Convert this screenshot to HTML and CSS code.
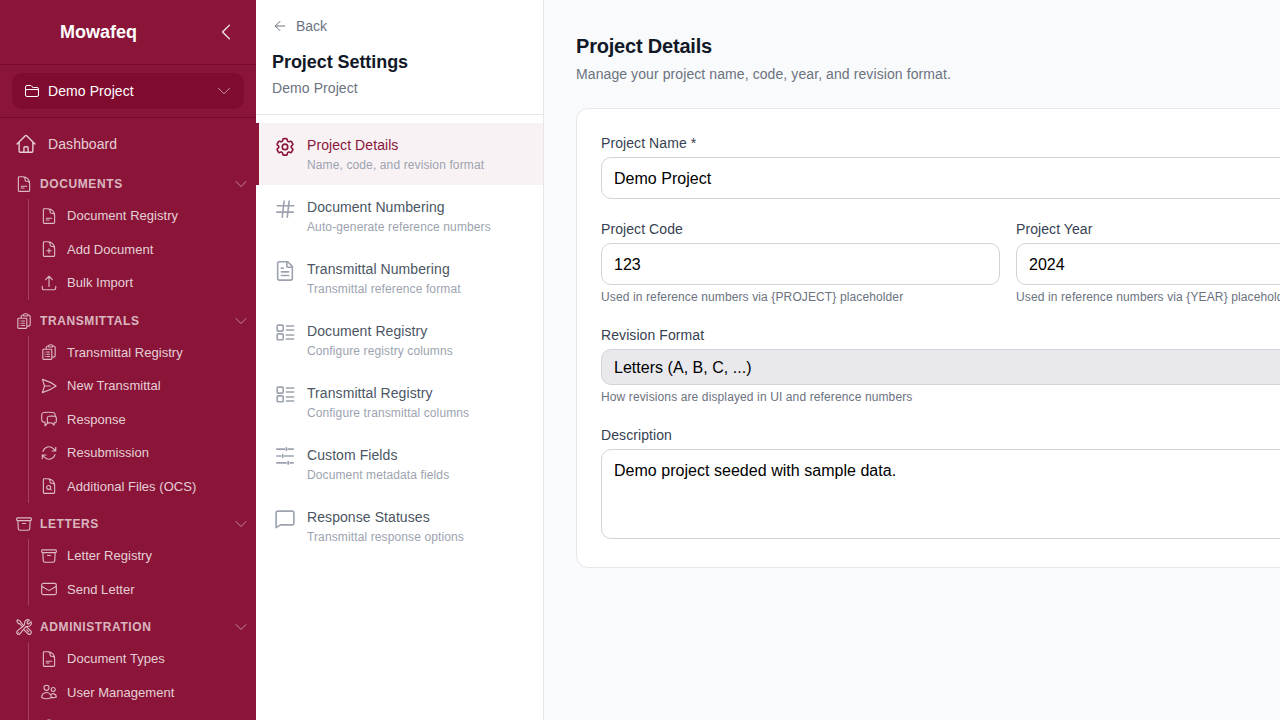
FILE: index.html
```html
<!DOCTYPE html>
<html lang="en">
<head>
<meta charset="utf-8">
<title>Project Settings</title>
<link rel="stylesheet" href="styles.css">
</head>
<body>
<svg class="defs" aria-hidden="true">
<symbol id="i-home" viewBox="0 0 24 24"><path d="m2.25 12 8.954-8.955c.44-.439 1.152-.439 1.591 0L21.75 12M4.5 9.75v10.125c0 .621.504 1.125 1.125 1.125H9.75v-4.875c0-.621.504-1.125 1.125-1.125h2.25c.621 0 1.125.504 1.125 1.125V21h4.125c.621 0 1.125-.504 1.125-1.125V9.75M8.25 21h8.25"/></symbol>
<symbol id="i-folder" viewBox="0 0 24 24"><path d="M2.25 12.75V12A2.25 2.25 0 0 1 4.5 9.75h15A2.25 2.25 0 0 1 21.75 12v.75m-8.69-6.44-2.12-2.12a1.5 1.5 0 0 0-1.061-.44H4.5A2.25 2.25 0 0 0 2.25 6v12a2.25 2.25 0 0 0 2.25 2.25h15A2.25 2.25 0 0 0 21.75 18V9a2.25 2.25 0 0 0-2.25-2.25h-5.379a1.5 1.5 0 0 1-1.06-.44Z"/></symbol>
<symbol id="i-left" viewBox="0 0 24 24"><path d="M15.75 19.5 8.25 12l7.5-7.5"/></symbol>
<symbol id="i-down" viewBox="0 0 24 24"><path d="m19.5 8.25-7.5 7.5-7.5-7.5"/></symbol>
<symbol id="i-back" viewBox="0 0 24 24"><path d="M19 12H5M12 19l-7-7 7-7"/></symbol>
<symbol id="i-doc" viewBox="0 0 24 24"><path d="M19.5 14.25v-2.625a3.375 3.375 0 0 0-3.375-3.375h-1.5A1.125 1.125 0 0 1 13.5 7.125v-1.5a3.375 3.375 0 0 0-3.375-3.375H8.25m0 12.750h7.500m-7.500 2.250h3.750M10.500 2.250H5.625c-.621 0-1.125.504-1.125 1.125v17.250c0 .621.504 1.125 1.125 1.125h12.750c.621 0 1.125-.504 1.125-1.125V11.250a9 9 0 0 0-9-9Z"/></symbol>
<symbol id="i-docplus" viewBox="0 0 24 24"><path d="M19.5 14.25v-2.625a3.375 3.375 0 0 0-3.375-3.375h-1.5A1.125 1.125 0 0 1 13.5 7.125v-1.5a3.375 3.375 0 0 0-3.375-3.375H8.25m3.75 9v6m3-3H9m1.5-12H5.625c-.621 0-1.125.504-1.125 1.125v17.25c0 .621.504 1.125 1.125 1.125h12.75c.621 0 1.125-.504 1.125-1.125V11.25a9 9 0 0 0-9-9Z"/></symbol>
<symbol id="i-upload" viewBox="0 0 24 24"><path d="M3 16.5v2.25A2.25 2.25 0 0 0 5.25 21h13.5A2.25 2.25 0 0 0 21 18.75V16.5m-13.5-9L12 3m0 0 4.5 4.5M12 3v13.5"/></symbol>
<symbol id="i-clip" viewBox="0 0 24 24"><path d="M9 12h3.75M9 15h3.75M9 18h3.75m3 .75H18a2.25 2.25 0 0 0 2.25-2.25V6.108c0-1.135-.845-2.098-1.976-2.192a48.424 48.424 0 0 0-1.123-.08m-5.801 0c-.065.21-.1.433-.1.664 0 .414.336.75.75.75h4.5a.75.75 0 0 0 .75-.75 2.25 2.25 0 0 0-.1-.664m-5.8 0A2.251 2.251 0 0 1 13.5 2.25H15c1.012 0 1.867.668 2.15 1.586m-5.8 0c-.376.023-.75.05-1.124.08C9.095 4.01 8.25 4.973 8.25 6.108V8.25m0 0H4.875c-.621 0-1.125.504-1.125 1.125v11.25c0 .621.504 1.125 1.125 1.125h9.75c.621 0 1.125-.504 1.125-1.125V9.375c0-.621-.504-1.125-1.125-1.125H8.25ZM6.75 12h.008v.008H6.75V12Zm0 3h.008v.008H6.75V15Zm0 3h.008v.008H6.75V18Z"/></symbol>
<symbol id="i-send" viewBox="0 0 24 24"><path d="M6 12 3.269 3.125A59.769 59.769 0 0 1 21.485 12 59.768 59.768 0 0 1 3.27 20.875L5.999 12Zm0 0h7.5"/></symbol>
<symbol id="i-chats" viewBox="0 0 24 24"><path d="M20.25 8.511c.884.284 1.5 1.128 1.5 2.097v4.286c0 1.136-.847 2.1-1.98 2.193-.34.027-.68.052-1.02.072v3.091l-3-3c-1.354 0-2.694-.055-4.02-.163a2.115 2.115 0 0 1-.825-.242m9.345-8.334a2.126 2.126 0 0 0-.476-.095 48.64 48.64 0 0 0-8.048 0c-1.131.094-1.976 1.057-1.976 2.192v4.286c0 .837.46 1.58 1.155 1.951m9.345-8.334V6.637c0-1.621-1.152-3.026-2.76-3.235A48.455 48.455 0 0 0 11.25 3c-2.115 0-4.198.137-6.24.402-1.608.209-2.76 1.614-2.76 3.235v6.226c0 1.621 1.152 3.026 2.76 3.235.577.075 1.157.14 1.74.194V21l4.155-4.155"/></symbol>
<symbol id="i-sync" viewBox="0 0 24 24"><path d="M16.023 9.348h4.992v-.001M2.985 19.644v-4.992m0 0h4.992m-4.993 0 3.181 3.183a8.25 8.25 0 0 0 13.803-3.7M4.031 9.865a8.25 8.25 0 0 1 13.803-3.7l3.181 3.182m0-4.991v4.99"/></symbol>
<symbol id="i-docsearch" viewBox="0 0 24 24"><path d="M19.5 14.25v-2.625a3.375 3.375 0 0 0-3.375-3.375h-1.5A1.125 1.125 0 0 1 13.5 7.125v-1.5a3.375 3.375 0 0 0-3.375-3.375H8.25m5.231 13.481L15 17.25m-4.5-15H5.625c-.621 0-1.125.504-1.125 1.125v17.25c0 .621.504 1.125 1.125 1.125h12.75c.621 0 1.125-.504 1.125-1.125V11.25a9 9 0 0 0-9-9Zm3.75 11.625a2.625 2.625 0 1 1-5.25 0 2.625 2.625 0 0 1 5.25 0Z"/></symbol>
<symbol id="i-archive" viewBox="0 0 24 24"><path d="m20.25 7.5-.625 10.632a2.25 2.25 0 0 1-2.247 2.118H6.622a2.25 2.25 0 0 1-2.247-2.118L3.75 7.5M10 11.25h4M3.375 7.5h17.25c.621 0 1.125-.504 1.125-1.125v-1.5c0-.621-.504-1.125-1.125-1.125H3.375c-.621 0-1.125.504-1.125 1.125v1.5c0 .621.504 1.125 1.125 1.125Z"/></symbol>
<symbol id="i-mail" viewBox="0 0 24 24"><path d="M21.75 6.75v10.5a2.25 2.25 0 0 1-2.25 2.25h-15a2.25 2.25 0 0 1-2.25-2.25V6.75m19.5 0A2.25 2.25 0 0 0 19.5 4.5h-15a2.25 2.25 0 0 0-2.25 2.25m19.5 0v.243a2.25 2.25 0 0 1-1.07 1.916l-7.5 4.615a2.25 2.25 0 0 1-2.36 0L3.32 8.91a2.25 2.25 0 0 1-1.07-1.916V6.75"/></symbol>
<symbol id="i-tools" viewBox="0 0 24 24"><path d="M11.42 15.17 17.25 21A2.652 2.652 0 0 0 21 17.25l-5.877-5.877M11.42 15.17l2.496-3.03c.317-.384.74-.626 1.208-.766M11.42 15.17l-4.655 5.653a2.548 2.548 0 1 1-3.586-3.586l6.837-5.63m5.108-.233c.55-.164 1.163-.188 1.743-.14a4.5 4.5 0 0 0 4.486-6.336l-3.276 3.277a3.004 3.004 0 0 1-2.25-2.25l3.276-3.276a4.5 4.5 0 0 0-6.336 4.486c.091 1.076-.071 2.264-.904 2.95l-.102.085m-1.745 1.437L5.909 7.5H4.5L2.25 3.75l1.5-1.5L7.5 4.5v1.409l4.26 4.26m-1.745 1.437 1.745-1.437m6.615 8.206L15.75 15.75M4.867 19.125h.008v.008h-.008v-.008Z"/></symbol>
<symbol id="i-users" viewBox="0 0 24 24"><path d="M15 19.128a9.38 9.38 0 0 0 2.625.372 9.337 9.337 0 0 0 4.121-.952 4.125 4.125 0 0 0-7.533-2.493M15 19.128v-.003c0-1.113-.285-2.16-.786-3.07M15 19.128v.106A12.318 12.318 0 0 1 8.624 21c-2.331 0-4.512-.645-6.374-1.766l-.001-.109a6.375 6.375 0 0 1 11.964-3.07M12 6.375a3.375 3.375 0 1 1-6.75 0 3.375 3.375 0 0 1 6.75 0Zm8.25 2.25a2.625 2.625 0 1 1-5.25 0 2.625 2.625 0 0 1 5.25 0Z"/></symbol>
<symbol id="i-cog" viewBox="0 -1 24 24"><path d="M9.594 3.94c.09-.542.56-.94 1.11-.94h2.593c.55 0 1.02.398 1.11.94l.213 1.281c.063.374.313.686.645.87.074.04.147.083.22.127.325.196.72.257 1.075.124l1.217-.456a1.125 1.125 0 0 1 1.37.49l1.296 2.247a1.125 1.125 0 0 1-.26 1.431l-1.003.827c-.293.241-.438.613-.43.992a7.723 7.723 0 0 1 0 .255c-.008.378.137.75.43.991l1.004.827c.424.35.534.955.26 1.43l-1.298 2.247a1.125 1.125 0 0 1-1.369.491l-1.217-.456c-.355-.133-.75-.072-1.076.124a6.47 6.47 0 0 1-.22.128c-.331.183-.581.495-.644.869l-.213 1.281c-.09.543-.56.94-1.11.94h-2.594c-.55 0-1.019-.398-1.11-.94l-.213-1.281c-.062-.374-.312-.686-.644-.87a6.52 6.52 0 0 1-.22-.127c-.325-.196-.72-.257-1.076-.124l-1.217.456a1.125 1.125 0 0 1-1.369-.49l-1.297-2.247a1.125 1.125 0 0 1 .26-1.431l1.004-.827c.292-.24.437-.613.43-.991a6.932 6.932 0 0 1 0-.255c.007-.38-.138-.751-.43-.992l-1.004-.827a1.125 1.125 0 0 1-.26-1.43l1.297-2.247a1.125 1.125 0 0 1 1.37-.491l1.216.456c.356.133.751.072 1.076-.124.072-.044.146-.086.22-.128.332-.183.582-.495.644-.869l.214-1.28Z"/><path d="M15 12a3 3 0 1 1-6 0 3 3 0 0 1 6 0Z"/></symbol>
<symbol id="i-hash" viewBox="0 0 24 24"><path d="M3.500 9.500h18M3 16.500h18M11 4.500 9 22M16.500 4.500l-2 17.500"/></symbol>
<symbol id="i-file" viewBox="0 -1 24 24"><path d="M15 2H6a2 2 0 0 0-2 2v16a2 2 0 0 0 2 2h12a2 2 0 0 0 2-2V7Z"/><path d="M14 2v4a2 2 0 0 0 2 2h4M10 9H8M16 13H8M16 17H8"/></symbol>
<symbol id="i-columns" viewBox="0 0 24 24"><rect x="3.500" y="4.500" width="6.500" height="6.500" rx="1"/><rect x="3.500" y="14" width="6.500" height="6.500" rx="1"/><path d="M13.500 5.500h8M13.500 9.800h8M13.500 15.300h8M13.500 19.600h8"/></symbol>
<symbol id="i-sliders" viewBox="0 0 24 24"><path d="M3 4.500h8.500M15.500 4.500H21M13.500 3v3M3 12h4.500M11.500 12H21M9.500 10.500v3M3 19.500h10.500M17.500 19.500H21M15.500 18v3"/></symbol>
<symbol id="i-bubble" viewBox="0 0 24 24"><path d="M2.300 6.500a2 2 0 0 1 2-2h15.400a2 2 0 0 1 2 2v11a2 2 0 0 1-2 2H7L2.300 22.500Z"/></symbol>
</svg>

<div class="app">
  <aside class="sidebar">
    <div class="brand">
      <span class="brand-name">Mowafeq</span>
      <svg class="ico ico-22 ico-bright"><use href="#i-left"/></svg>
    </div>
    <div class="project-wrap">
      <div class="project-select">
        <svg class="ico ico-16 ico-white"><use href="#i-folder"/></svg>
        <span class="project-name">Demo Project</span>
        <svg class="ico ico-18 thin"><use href="#i-down"/></svg>
      </div>
    </div>
    <nav class="side-nav">
      <div class="dash">
        <svg class="ico ico-22"><use href="#i-home"/></svg>
        <span>Dashboard</span>
      </div>
      <div class="group">
        <div class="group-head">
          <svg class="ico ico-18"><use href="#i-doc"/></svg>
          <span class="group-label">Documents</span>
          <svg class="ico ico-16 caret"><use href="#i-down"/></svg>
        </div>
        <div class="group-items">
          <div class="sub"><svg class="ico ico-18"><use href="#i-doc"/></svg><span>Document Registry</span></div>
          <div class="sub"><svg class="ico ico-18"><use href="#i-docplus"/></svg><span>Add Document</span></div>
          <div class="sub"><svg class="ico ico-18"><use href="#i-upload"/></svg><span>Bulk Import</span></div>
        </div>
      </div>
      <div class="group">
        <div class="group-head">
          <svg class="ico ico-18"><use href="#i-clip"/></svg>
          <span class="group-label">Transmittals</span>
          <svg class="ico ico-16 caret"><use href="#i-down"/></svg>
        </div>
        <div class="group-items">
          <div class="sub"><svg class="ico ico-18"><use href="#i-clip"/></svg><span>Transmittal Registry</span></div>
          <div class="sub"><svg class="ico ico-18"><use href="#i-send"/></svg><span>New Transmittal</span></div>
          <div class="sub"><svg class="ico ico-18"><use href="#i-chats"/></svg><span>Response</span></div>
          <div class="sub"><svg class="ico ico-18"><use href="#i-sync"/></svg><span>Resubmission</span></div>
          <div class="sub"><svg class="ico ico-18"><use href="#i-docsearch"/></svg><span>Additional Files (OCS)</span></div>
        </div>
      </div>
      <div class="group">
        <div class="group-head">
          <svg class="ico ico-18"><use href="#i-archive"/></svg>
          <span class="group-label">Letters</span>
          <svg class="ico ico-16 caret"><use href="#i-down"/></svg>
        </div>
        <div class="group-items">
          <div class="sub"><svg class="ico ico-18"><use href="#i-archive"/></svg><span>Letter Registry</span></div>
          <div class="sub"><svg class="ico ico-18"><use href="#i-mail"/></svg><span>Send Letter</span></div>
        </div>
      </div>
      <div class="group">
        <div class="group-head">
          <svg class="ico ico-18"><use href="#i-tools"/></svg>
          <span class="group-label">Administration</span>
          <svg class="ico ico-16 caret"><use href="#i-down"/></svg>
        </div>
        <div class="group-items">
          <div class="sub"><svg class="ico ico-18"><use href="#i-doc"/></svg><span>Document Types</span></div>
          <div class="sub"><svg class="ico ico-18"><use href="#i-users"/></svg><span>User Management</span></div>
          <div class="sub"><svg class="ico ico-18"><use href="#i-cog"/></svg></div>
        </div>
      </div>
    </nav>
  </aside>

  <section class="settings">
    <header class="settings-head">
      <div class="back">
        <svg class="ico ico-16"><use href="#i-back"/></svg>
        <span>Back</span>
      </div>
      <h2 class="settings-title">Project Settings</h2>
      <p class="settings-sub">Demo Project</p>
    </header>
    <nav class="settings-nav">
      <div class="set-item active">
        <svg class="ico ico-22"><use href="#i-cog"/></svg>
        <div><div class="set-title">Project Details</div><div class="set-desc">Name, code, and revision format</div></div>
      </div>
      <div class="set-item">
        <svg class="ico ico-22"><use href="#i-hash"/></svg>
        <div><div class="set-title">Document Numbering</div><div class="set-desc">Auto-generate reference numbers</div></div>
      </div>
      <div class="set-item">
        <svg class="ico ico-22"><use href="#i-file"/></svg>
        <div><div class="set-title">Transmittal Numbering</div><div class="set-desc">Transmittal reference format</div></div>
      </div>
      <div class="set-item">
        <svg class="ico ico-22"><use href="#i-columns"/></svg>
        <div><div class="set-title">Document Registry</div><div class="set-desc">Configure registry columns</div></div>
      </div>
      <div class="set-item">
        <svg class="ico ico-22"><use href="#i-columns"/></svg>
        <div><div class="set-title">Transmittal Registry</div><div class="set-desc">Configure transmittal columns</div></div>
      </div>
      <div class="set-item">
        <svg class="ico ico-22"><use href="#i-sliders"/></svg>
        <div><div class="set-title">Custom Fields</div><div class="set-desc">Document metadata fields</div></div>
      </div>
      <div class="set-item">
        <svg class="ico ico-22"><use href="#i-bubble"/></svg>
        <div><div class="set-title">Response Statuses</div><div class="set-desc">Transmittal response options</div></div>
      </div>
    </nav>
  </section>

  <main class="main">
    <h1 class="page-title">Project Details</h1>
    <p class="page-sub">Manage your project name, code, year, and revision format.</p>
    <div class="card">
      <div class="field">
        <div class="label">Project Name *</div>
        <div class="input">Demo Project</div>
      </div>
      <div class="two">
        <div>
          <div class="label">Project Code</div>
          <div class="input">123</div>
          <div class="help">Used in reference numbers via {PROJECT} placeholder</div>
        </div>
        <div>
          <div class="label">Project Year</div>
          <div class="input">2024</div>
          <div class="help">Used in reference numbers via {YEAR} placeholder</div>
        </div>
      </div>
      <div class="field">
        <div class="label">Revision Format</div>
        <div class="select">Letters (A, B, C, ...)</div>
        <div class="help">How revisions are displayed in UI and reference numbers</div>
      </div>
      <div class="field">
        <div class="label">Description</div>
        <div class="textarea">Demo project seeded with sample data.</div>
      </div>
    </div>
  </main>
</div>
</body>
</html>
```
FILE: styles.css
```css
* { box-sizing: border-box; }
html, body { margin: 0; height: 100%; overflow: hidden; }
body { font-family: "Liberation Sans", Arial, sans-serif; background: #f9fafb; color: #111827; }
h1, h2, p { margin: 0; }
.defs { display: none; }

.app { display: flex; width: 1600px; height: 720px; }

.ico { flex: none; fill: none; stroke: currentColor; stroke-width: 1.5; stroke-linecap: round; stroke-linejoin: round; }
.ico-16 { width: 16px; height: 16px; }
.ico-18 { width: 18px; height: 18px; }
.ico-22 { width: 22px; height: 22px; }
.ico-white { color: #fff; }
.ico-bright { color: rgba(255, 255, 255, .9); }
.thin { stroke-width: 1.25; }

/* sidebar */
.sidebar { flex: none; width: 256px; height: 720px; overflow: hidden; background: #8a1538; color: rgba(255, 255, 255, .8); }
.brand { display: flex; align-items: center; justify-content: space-between; height: 65px; padding: 0 19px 0 60px; border-bottom: 1px solid #7a0a2e; }
.brand-name { font-size: 18px; font-weight: 700; color: #fff; }
.project-wrap { height: 53px; padding: 8px 12px; border-bottom: 1px solid #7a0a2e; }
.project-select { display: flex; align-items: center; height: 36px; padding: 0 11px 0 12px; gap: 8px; border-radius: 10px; background: #7f0b2f; color: rgba(255, 255, 255, .6); }
.project-name { flex: 1; font-size: 14px; letter-spacing: .08px; color: #fff; }
.side-nav { padding-top: 6px; display: flex; flex-direction: column; }
.dash { display: flex; align-items: center; gap: 11px; height: 40px; padding-left: 15px; margin-bottom: 5.5px; font-size: 14px; letter-spacing: .08px; }
.group { margin-bottom: 6.5px; }
.group-head { display: flex; align-items: center; height: 29.5px; padding: 0 7px 0 15px; gap: 7px; color: rgba(255, 255, 255, .7); }
.group-label { flex: 1; font-size: 12px; font-weight: 700; letter-spacing: .6px; text-transform: uppercase; }
.caret { color: rgba(255, 255, 255, .6); stroke-width: 1.25; }
.group-items { margin-left: 28px; border-left: 1px solid rgba(255, 255, 255, .2); }
.sub { display: flex; align-items: center; gap: 9px; height: 33.5px; padding-left: 11px; font-size: 13px; letter-spacing: .03px; line-height: 19.5px; }
.sub .ico { color: rgba(255, 255, 255, .7); }

/* settings panel */
.settings { flex: none; width: 288px; height: 720px; background: #fff; border-right: 1px solid #e5e7eb; }
.settings-head { height: 115px; padding: 16px 16px 0; border-bottom: 1px solid #e5e7eb; }
.back { display: flex; align-items: center; gap: 8px; height: 20px; font-size: 14px; color: #6b7280; }
.settings-title { margin-top: 12px; font-size: 18px; line-height: 28px; font-weight: 700; letter-spacing: -.06px; color: #111827; }
.settings-sub { margin-top: 4px; font-size: 14px; line-height: 16px; letter-spacing: .08px; color: #6b7280; }
.settings-nav { padding-top: 8px; }
.set-item { display: flex; align-items: flex-start; gap: 11px; height: 62px; padding: 12px 12px 12px 15px; border-left: 3px solid transparent; color: #9ca3af; }
.set-item .ico { stroke-width: 1.75; }
.set-item.active { border-left-color: #8a1538; background: #f8f2f4; color: #8a1538; }
.set-title { font-size: 14px; line-height: 20px; letter-spacing: .08px; color: #4b5563; }
.set-item.active .set-title { color: #8a1538; }
.set-desc { margin-top: 2px; font-size: 12px; line-height: 16px; letter-spacing: .12px; color: #9ca3af; }

/* main */
.main { flex: none; width: 928px; padding: 32px; }
.page-title { font-size: 20px; line-height: 28px; font-weight: 700; letter-spacing: -.2px; color: #111827; }
.page-sub { margin-top: 4px; font-size: 14px; line-height: 20px; letter-spacing: .09px; color: #6b7280; }
.card { margin-top: 24px; width: 864px; padding: 24px 24px 28px; background: #fff; border: 1px solid #e5e7eb; border-radius: 12px; display: flex; flex-direction: column; gap: 20px; }
.two { display: grid; grid-template-columns: 1fr 1fr; gap: 16px; }
.label { margin-bottom: 4px; font-size: 14px; line-height: 20px; letter-spacing: .08px; color: #374151; }
.input { height: 42px; padding: 0 12px; line-height: 41px; font-size: 16px; letter-spacing: .03px; color: #000; background: #fff; border: 1px solid #d1d5db; border-radius: 10px; }
.select { height: 36px; padding: 0 12px; line-height: 35px; font-size: 16px; letter-spacing: .03px; color: #000; background: #e8e8ed; border: 1px solid #d1d5db; border-radius: 10px; }
.textarea { height: 90px; padding: 11px 12px; line-height: 19px; font-size: 16px; letter-spacing: .03px; color: #000; background: #fff; border: 1px solid #d1d5db; border-radius: 10px; }
.help { margin-top: 4px; font-size: 12px; line-height: 16px; letter-spacing: .12px; color: #6b7280; }
```
